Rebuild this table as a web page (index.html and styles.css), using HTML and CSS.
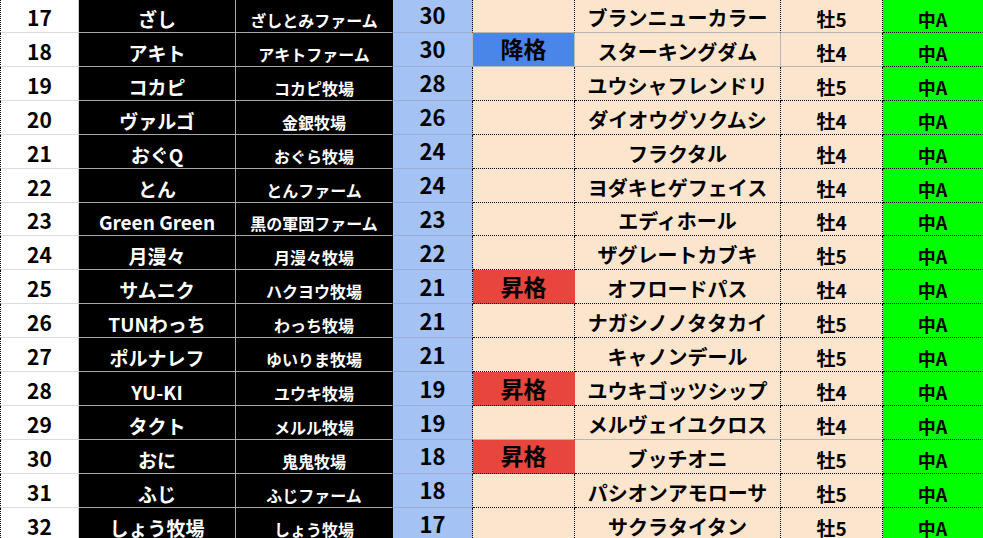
FILE: index.html
```html
<!DOCTYPE html>
<html lang="ja">
<head>
<meta charset="utf-8">
<link rel="stylesheet" href="styles.css">
</head>
<body>
<div class="sheet">
  <div class="row r-top"><div class="c a">17</div><div class="c b">ざし</div><div class="c f">ざしとみファーム</div><div class="c s">30</div><div class="c e"></div><div class="c h">ブランニューカラー</div><div class="c g">牡5</div><div class="c k">中A</div></div>
  <div class="row r-plain"><div class="c a">18</div><div class="c b">アキト</div><div class="c f">アキトファーム</div><div class="c s">30</div><div class="c e down">降格</div><div class="c h">スターキングダム</div><div class="c g">牡4</div><div class="c k">中A</div></div>
  <div class="row r-dot"><div class="c a">19</div><div class="c b">コカピ</div><div class="c f">コカピ牧場</div><div class="c s">28</div><div class="c e"></div><div class="c h">ユウシャフレンドリ</div><div class="c g">牡5</div><div class="c k">中A</div></div>
  <div class="row r-dot"><div class="c a">20</div><div class="c b">ヴァルゴ</div><div class="c f">金銀牧場</div><div class="c s">26</div><div class="c e"></div><div class="c h">ダイオウグソクムシ</div><div class="c g">牡4</div><div class="c k">中A</div></div>
  <div class="row r-dot"><div class="c a">21</div><div class="c b">おぐQ</div><div class="c f">おぐら牧場</div><div class="c s">24</div><div class="c e"></div><div class="c h">フラクタル</div><div class="c g">牡4</div><div class="c k">中A</div></div>
  <div class="row r-dot"><div class="c a">22</div><div class="c b">とん</div><div class="c f">とんファーム</div><div class="c s">24</div><div class="c e"></div><div class="c h">ヨダキヒゲフェイス</div><div class="c g">牡4</div><div class="c k">中A</div></div>
  <div class="row r-dot"><div class="c a">23</div><div class="c b">Green Green</div><div class="c f">黒の軍団ファーム</div><div class="c s">23</div><div class="c e"></div><div class="c h">エディホール</div><div class="c g">牡4</div><div class="c k">中A</div></div>
  <div class="row r-dot"><div class="c a">24</div><div class="c b">月漫々</div><div class="c f">月漫々牧場</div><div class="c s">22</div><div class="c e"></div><div class="c h">ザグレートカブキ</div><div class="c g">牡5</div><div class="c k">中A</div></div>
  <div class="row r-dot"><div class="c a">25</div><div class="c b">サムニク</div><div class="c f">ハクヨウ牧場</div><div class="c s">21</div><div class="c e up">昇格</div><div class="c h">オフロードパス</div><div class="c g">牡4</div><div class="c k">中A</div></div>
  <div class="row r-dot"><div class="c a">26</div><div class="c b">TUNわっち</div><div class="c f">わっち牧場</div><div class="c s">21</div><div class="c e"></div><div class="c h">ナガシノノタタカイ</div><div class="c g">牡5</div><div class="c k">中A</div></div>
  <div class="row r-dot"><div class="c a">27</div><div class="c b">ポルナレフ</div><div class="c f">ゆいりま牧場</div><div class="c s">21</div><div class="c e"></div><div class="c h">キャノンデール</div><div class="c g">牡5</div><div class="c k">中A</div></div>
  <div class="row r-dot"><div class="c a">28</div><div class="c b">YU-KI</div><div class="c f">ユウキ牧場</div><div class="c s">19</div><div class="c e up">昇格</div><div class="c h">ユウキゴッツシップ</div><div class="c g">牡4</div><div class="c k">中A</div></div>
  <div class="row r-top"><div class="c a">29</div><div class="c b">タクト</div><div class="c f">メルル牧場</div><div class="c s">19</div><div class="c e"></div><div class="c h">メルヴェイユクロス</div><div class="c g">牡4</div><div class="c k">中A</div></div>
  <div class="row r-dot"><div class="c a">30</div><div class="c b">おに</div><div class="c f">鬼鬼牧場</div><div class="c s">18</div><div class="c e up">昇格</div><div class="c h">ブッチオニ</div><div class="c g">牡5</div><div class="c k">中A</div></div>
  <div class="row r-dot"><div class="c a">31</div><div class="c b">ふじ</div><div class="c f">ふじファーム</div><div class="c s">18</div><div class="c e"></div><div class="c h">パシオンアモローサ</div><div class="c g">牡5</div><div class="c k">中A</div></div>
  <div class="row r-dot"><div class="c a">32</div><div class="c b">しょう牧場</div><div class="c f">しょう牧場</div><div class="c s">17</div><div class="c e"></div><div class="c h">サクラタイタン</div><div class="c g">牡5</div><div class="c k">中A</div></div>
</div>
</body>
</html>
```

FILE: styles.css
```css
html, body {
  margin: 0;
  padding: 0;
  background: #ffffff;
  overflow: hidden;
}

body {
  font-family: "Noto Sans CJK JP", "Noto Sans", sans-serif;
  font-weight: 700;
  color: #000;
}

.sheet {
  display: flex;
  flex-direction: column;
  margin-top: -1px;
  width: 100%;
}

.row {
  display: grid;
  grid-template-columns: 79px 157px 157px 80px 102px 206px 102px 1fr;
  height: 33.93px;
  flex: none;
}

.c {
  box-sizing: border-box;
  display: flex;
  justify-content: center;
  align-items: flex-end;
  padding-bottom: 4px;
  line-height: 1;
  white-space: nowrap;
  border-right: 1px solid #b7b7b7;
  border-bottom: 1px solid #b7b7b7;
}

/* rank column */
.a {
  background: #fff;
  border-left: 1px dotted #000;
  border-right-color: #c8c8c8;
  border-bottom-color: #dcdcdc;
  font-size: 21px;
}

/* owner name */
.b {
  background: #000;
  color: #fff;
  font-size: 19px;
  border-color: #a8a8a8;
}

/* farm name */
.f {
  background: #000;
  color: #fff;
  font-size: 16px;
  border-bottom-color: #a8a8a8;
  border-right-color: #000;
}

/* score */
.s {
  background: #a4c2f4;
  font-size: 22px;
  align-items: center;
  padding-bottom: 2px;
  border-bottom-color: #98aed2;
}

/* status */
.e {
  background: #fce5cd;
  font-size: 23px;
  align-items: center;
  padding-bottom: 1px;
}

.e.down {
  background: #4a86e8;
}

.e.up {
  background: #e8453c;
  border-right-color: #e8453c;
}

/* horse */
.h {
  background: #fce5cd;
  font-size: 20px;
}

/* sex / age */
.g {
  background: #fce5cd;
  font-size: 19px;
  border-right: 1px dotted #000;
}

/* class */
.k {
  background: #00ff00;
  font-size: 18px;
  border-right-color: #00ff00;
  border-bottom: 1px dotted #000;
}

/* dotted-border rows */
.r-dot .s,
.r-dot .e,
.r-dot .h,
.r-top .s,
.r-top .e,
.r-top .h {
  border-right: 1px dotted #000;
}

.r-dot .e,
.r-dot .h,
.r-dot .g {
  border-bottom: 1px dotted #000;
}

.r-dot .e.up {
  border-right: 1px solid #e8453c;
}
```
